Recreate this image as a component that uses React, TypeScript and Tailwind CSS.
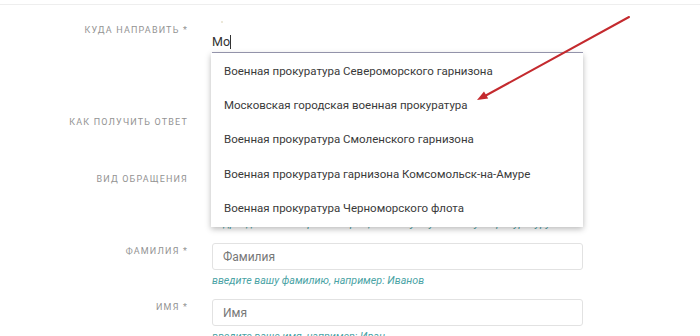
import React from "react";

const items = [
  "Военная прокуратура Североморского гарнизона",
  "Московская городская военная прокуратура",
  "Военная прокуратура Смоленского гарнизона",
  "Военная прокуратура гарнизона Комсомольск-на-Амуре",
  "Военная прокуратура Черноморского флота",
];

function Label({ children, pt }: { children: React.ReactNode; pt: string }) {
  return (
    <div className={`text-right text-[9px] leading-[12px] tracking-[0.13em] uppercase text-[#939393] ${pt}`}>
      {children}
    </div>
  );
}

export default function App() {
  return (
    <div
      className="relative w-[700px] h-[336px] overflow-hidden bg-white"
      style={{ fontFamily: "Roboto, 'Noto Sans', sans-serif" }}
    >
      <div className="h-[5px] border-b border-[#eeeeee]" />

      {/* Куда направить */}
      <div className="grid grid-cols-[188px_371px] gap-x-[24px] h-[48px]">
        <Label pt="pt-[19px]">Куда направить *</Label>
        <div className="flex items-end">
          <div className="w-full h-[19px] border-b border-[#9d9db5] text-[12.5px] leading-[16px] text-[#333] flex items-start">
            <span>Мо</span>
            <span className="inline-block w-px h-[14px] bg-[#333] mt-[1px]" />
          </div>
        </div>
      </div>

      {/* Как получить ответ */}
      <div className="grid grid-cols-[188px_371px] gap-x-[24px] h-[100px]">
        <Label pt="pt-[63px]">Как получить ответ</Label>
        <div />
      </div>

      {/* Вид обращения */}
      <div className="grid grid-cols-[188px_371px] gap-x-[24px] h-[78px]">
        <Label pt="pt-[20px]">Вид обращения</Label>
        <div className="pt-[64px] text-[10.7px] leading-[14px] italic text-[#4aa3a5] whitespace-nowrap">
          подразделение направит обращение в нужную военную прокуратуру
        </div>
      </div>

      {/* Фамилия */}
      <div className="grid grid-cols-[188px_371px] gap-x-[24px] mt-[12px]">
        <Label pt="pt-[2px]">Фамилия *</Label>
        <div>
          <div className="h-[27px] border border-[#e2e2e2] rounded-[3px] px-[10px] flex items-center text-[12px] text-[#777]">
            Фамилия
          </div>
          <div className="mt-[4px] text-[10.7px] leading-[14px] italic text-[#4aa3a5]">
            введите вашу фамилию, например: Иванов
          </div>
        </div>
      </div>

      {/* Имя */}
      <div className="grid grid-cols-[188px_371px] gap-x-[24px] mt-[11px]">
        <Label pt="pt-[2px]">Имя *</Label>
        <div>
          <div className="h-[27px] border border-[#e2e2e2] rounded-[3px] px-[10px] flex items-center text-[12px] text-[#777]">
            Имя
          </div>
          <div className="mt-[4px] text-[10.7px] leading-[14px] italic text-[#4aa3a5]">
            введите ваше имя, например: Иван
          </div>
        </div>
      </div>

      {/* Dropdown */}
      <div className="absolute left-[211px] top-[53px] w-[372px] bg-white shadow-[0_2px_6px_rgba(0,0,0,0.28)] py-px">
        {items.map((t) => (
          <div key={t} className="h-[34.4px] flex items-center px-[13px] text-[11.5px] text-[#3a3a3a]">
            {t}
          </div>
        ))}
      </div>

      {/* faint dot */}
      <div className="absolute left-[221px] top-[21px] w-[2px] h-[2px] rounded-full bg-[#e6e0cc]" />

      {/* Arrow */}
      <svg className="absolute left-0 top-0 pointer-events-none" width="700" height="336">
        <line x1="629" y1="17" x2="484" y2="96.5" stroke="#c42a2e" strokeWidth="2" strokeLinecap="round" />
        <polygon points="477,100 488.2,98.6 484,91.5" fill="#c42a2e" />
      </svg>
    </div>
  );
}
